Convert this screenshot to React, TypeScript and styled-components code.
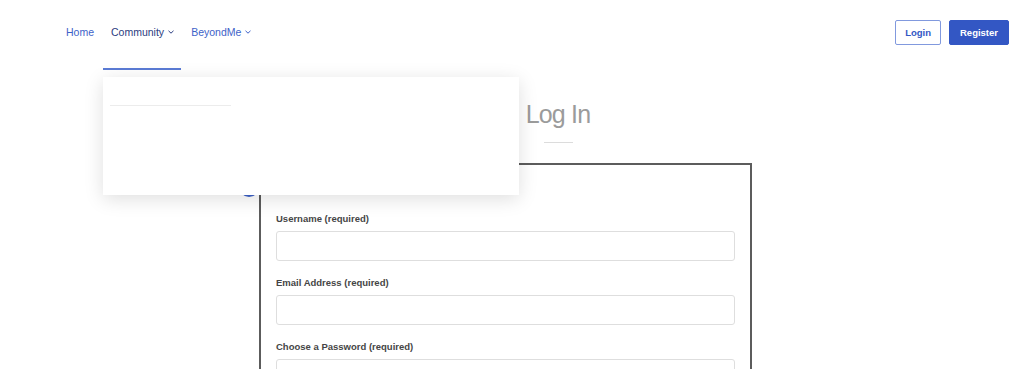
import React from "react";
import styled, { createGlobalStyle } from "styled-components";

const GlobalStyle = createGlobalStyle`
  html, body {
    margin: 0;
    padding: 0;
    overflow: hidden;
    background: #ffffff;
    font-family: "Liberation Sans", Arial, sans-serif;
  }
`;

const Header = styled.header`
  position: relative;
  height: 64px;
  display: flex;
  align-items: center;
  justify-content: space-between;
  padding: 0 15px 0 66px;
  z-index: 5;
`;

const Nav = styled.nav`
  display: flex;
  align-items: center;
  gap: 17px;
`;

const NavLink = styled.a<{ $active?: boolean }>`
  display: flex;
  align-items: center;
  gap: 4px;
  font-size: 10.5px;
  line-height: 14px;
  color: ${(p) => (p.$active ? "#2a3c80" : "#3d62c8")};
  text-decoration: none;
  cursor: pointer;
`;

const Underline = styled.div`
  position: absolute;
  left: 103px;
  top: 68px;
  width: 78px;
  height: 2px;
  background: #5b7bd5;
`;

const MenuPanel = styled.div`
  position: absolute;
  left: 103px;
  top: 77px;
  width: 416px;
  height: 118px;
  background: #ffffff;
  box-shadow: 0 4px 18px rgba(0, 0, 0, 0.13);
  padding: 28px 7px 0;
  box-sizing: border-box;
`;

const MenuDivider = styled.div`
  width: 121px;
  height: 1px;
  background: #ececec;
`;

const Actions = styled.div`
  display: flex;
  align-items: center;
  gap: 8px;
`;

const Button = styled.button<{ $primary?: boolean }>`
  height: 25px;
  padding: 0 ${(p) => (p.$primary ? "10px" : "9px")};
  border-radius: 2px;
  font-family: "Liberation Sans", Arial, sans-serif;
  font-size: 9.5px;
  font-weight: bold;
  cursor: pointer;
  border: 1px solid ${(p) => (p.$primary ? "#3357c4" : "#8199de")};
  background: ${(p) => (p.$primary ? "#3357c4" : "#ffffff")};
  color: ${(p) => (p.$primary ? "#ffffff" : "#3357c4")};
`;

const Main = styled.main`
  padding-left: 259px;
`;

const TitleBlock = styled.div`
  width: 598px;
  margin-top: 35px;
  display: flex;
  flex-direction: column;
  align-items: center;
`;

const Title = styled.h1`
  margin: 0;
  font-size: 25px;
  line-height: 30px;
  font-weight: 300;
  letter-spacing: -0.8px;
  color: #9b9b9b;
`;

const TitleRule = styled.div`
  width: 29px;
  height: 1px;
  background: #dcdcdc;
  margin-top: 13px;
`;

const Card = styled.section`
  position: relative;
  width: 493px;
  box-sizing: border-box;
  margin-top: 20px;
  border: 2px solid #5c5c5c;
  padding: 47px 15px 20px;
`;

const StepDot = styled.div`
  position: absolute;
  left: -22px;
  top: 12px;
  width: 20px;
  height: 20px;
  border-radius: 50%;
  background: #3d62c8;
`;

const Field = styled.div`
  display: flex;
  flex-direction: column;
  gap: 6px;
  margin-bottom: 15px;
`;

const Label = styled.label`
  font-size: 9.5px;
  line-height: 13px;
  font-weight: bold;
  color: #454545;
`;

const Input = styled.input`
  height: 30px;
  box-sizing: border-box;
  border: 1px solid #dedede;
  border-radius: 3px;
  padding: 0 10px;
  font-size: 12px;
  font-family: "Liberation Sans", Arial, sans-serif;
  outline: none;
`;

const Chevron = () => (
  <svg width="6" height="4" viewBox="0 0 6 4" fill="none">
    <polyline points="0.5,0.8 3,3.2 5.5,0.8" stroke="currentColor" strokeWidth="1" />
  </svg>
);

const fields = [
  { id: "username", label: "Username (required)", type: "text" },
  { id: "email", label: "Email Address (required)", type: "email" },
  { id: "password", label: "Choose a Password (required)", type: "password" },
];

export default function App() {
  return (
    <>
      <GlobalStyle />
      <Header>
        <Nav>
          <NavLink>Home</NavLink>
          <NavLink $active>
            Community <Chevron />
          </NavLink>
          <NavLink>
            BeyondMe <Chevron />
          </NavLink>
        </Nav>
        <Actions>
          <Button>Login</Button>
          <Button $primary>Register</Button>
        </Actions>
        <Underline />
        <MenuPanel>
          <MenuDivider />
        </MenuPanel>
      </Header>
      <Main>
        <TitleBlock>
          <Title>Log In</Title>
          <TitleRule />
        </TitleBlock>
        <Card>
          <StepDot />
          {fields.map((f) => (
            <Field key={f.id}>
              <Label htmlFor={f.id}>{f.label}</Label>
              <Input id={f.id} type={f.type} />
            </Field>
          ))}
        </Card>
      </Main>
    </>
  );
}
